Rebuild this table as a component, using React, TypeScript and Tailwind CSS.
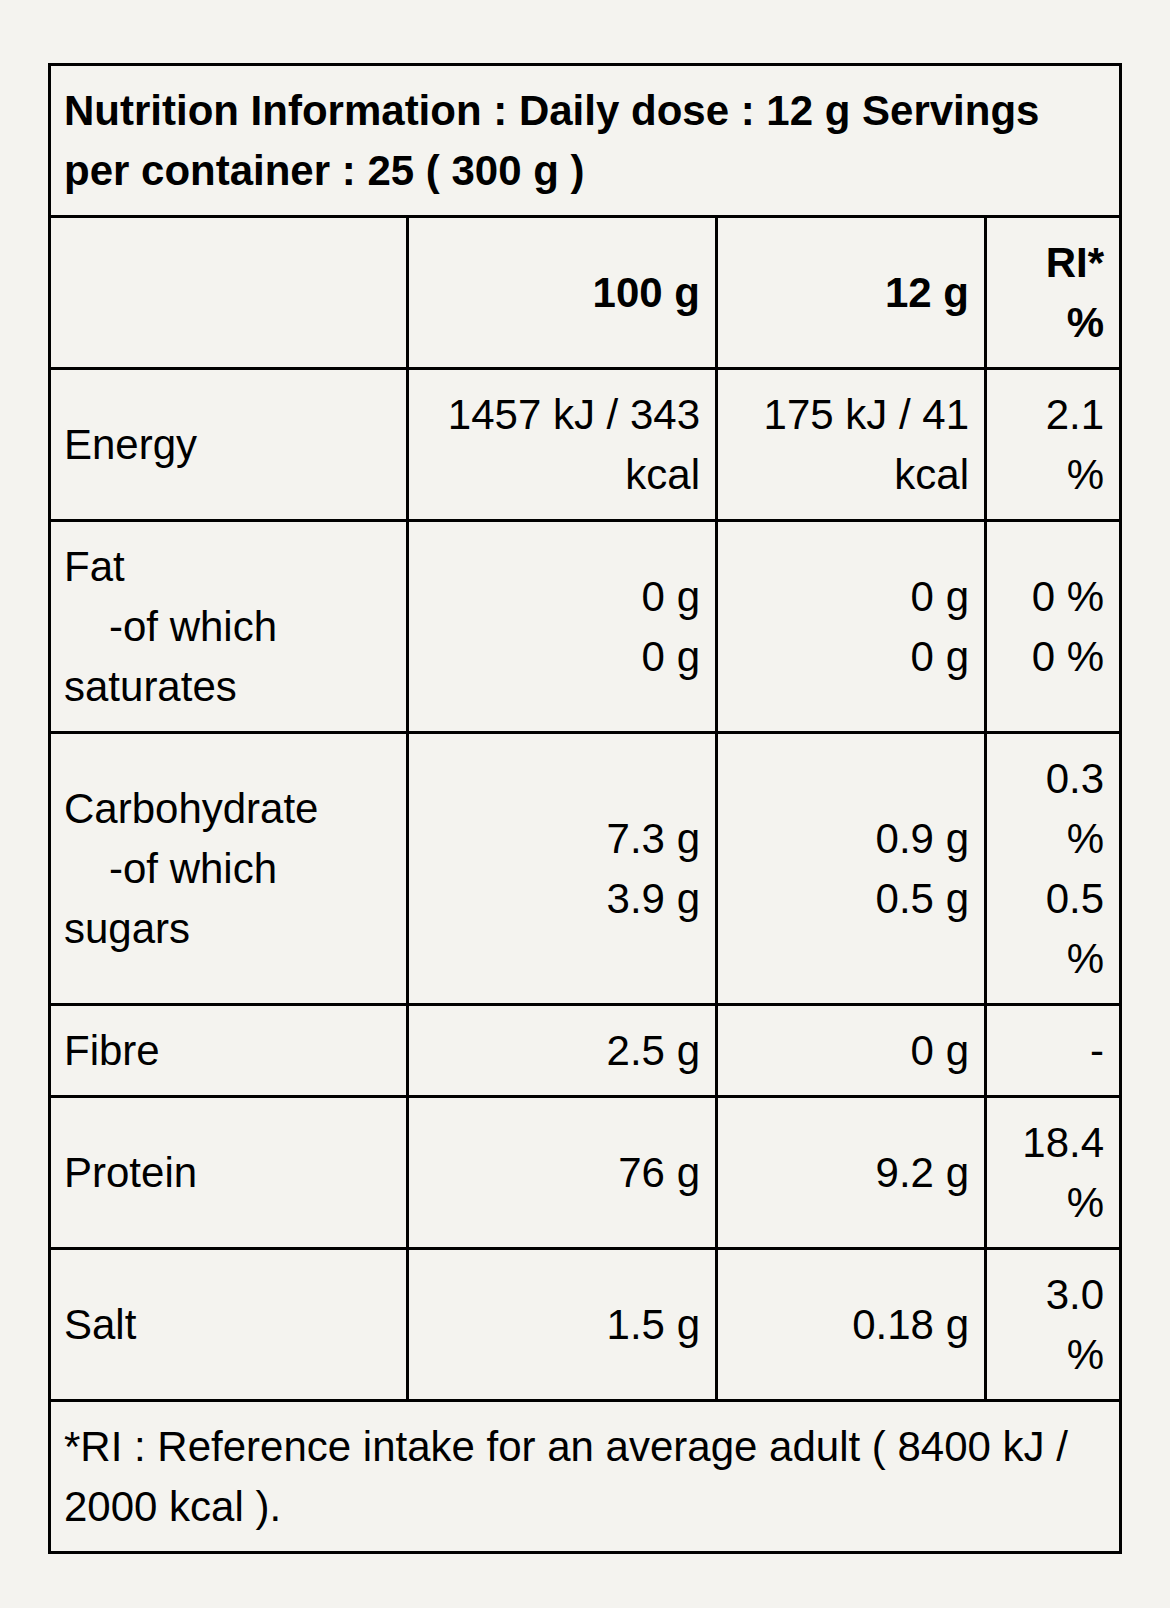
type Row = {
  label: { text: string; indent?: boolean }[];
  per100: string[];
  perDose: string[];
  ri: string[];
};

const rows: Row[] = [
  {
    label: [{ text: 'Energy' }],
    per100: ['1457 kJ / 343', 'kcal'],
    perDose: ['175 kJ / 41', 'kcal'],
    ri: ['2.1', '%'],
  },
  {
    label: [{ text: 'Fat' }, { text: '-of which', indent: true }, { text: 'saturates' }],
    per100: ['0 g', '0 g'],
    perDose: ['0 g', '0 g'],
    ri: ['0 %', '0 %'],
  },
  {
    label: [{ text: 'Carbohydrate' }, { text: '-of which', indent: true }, { text: 'sugars' }],
    per100: ['7.3 g', '3.9 g'],
    perDose: ['0.9 g', '0.5 g'],
    ri: ['0.3', '%', '0.5', '%'],
  },
  { label: [{ text: 'Fibre' }], per100: ['2.5 g'], perDose: ['0 g'], ri: ['-'] },
  { label: [{ text: 'Protein' }], per100: ['76 g'], perDose: ['9.2 g'], ri: ['18.4', '%'] },
  { label: [{ text: 'Salt' }], per100: ['1.5 g'], perDose: ['0.18 g'], ri: ['3.0', '%'] },
];

function Lines({ lines }: { lines: string[] }) {
  return (
    <>
      {lines.map((l, i) => (
        <div key={i}>{l}</div>
      ))}
    </>
  );
}

export default function App() {
  const cell = 'border-[3px] border-black pl-[13px] pr-[15px] pt-[15px] pb-[14px] align-middle';

  return (
    <div
      className="min-h-[1608px] w-full bg-[#f4f3ef] pl-[48px] pt-[63px] text-black"
      style={{ fontFamily: '"Liberation Sans", Arial, Helvetica, sans-serif' }}
    >
      <table className="w-[1071px] table-fixed border-collapse text-[42px] leading-[60px]">
        <colgroup>
          <col className="w-[358px]" />
          <col className="w-[309px]" />
          <col className="w-[269px]" />
          <col className="w-[135px]" />
        </colgroup>
        <thead>
          <tr>
            <th colSpan={4} className={`${cell} text-left font-bold`}>
              Nutrition Information : Daily dose : 12 g Servings
              <br />
              per container : 25 ( 300 g )
            </th>
          </tr>
          <tr>
            <th className={cell}></th>
            <th className={`${cell} text-right font-bold`}>100 g</th>
            <th className={`${cell} text-right font-bold`}>12 g</th>
            <th className={`${cell} text-right font-bold`}>
              <Lines lines={['RI*', '%']} />
            </th>
          </tr>
        </thead>
        <tbody>
          {rows.map((row) => (
            <tr key={row.label[0].text}>
              <td className={`${cell} text-left`}>
                {row.label.map((l, i) => (
                  <div key={i} className={l.indent ? 'pl-[45px]' : ''}>
                    {l.text}
                  </div>
                ))}
              </td>
              <td className={`${cell} text-right`}>
                <Lines lines={row.per100} />
              </td>
              <td className={`${cell} text-right`}>
                <Lines lines={row.perDose} />
              </td>
              <td className={`${cell} text-right`}>
                <Lines lines={row.ri} />
              </td>
            </tr>
          ))}
        </tbody>
        <tfoot>
          <tr>
            <td colSpan={4} className={`${cell} text-left`}>
              *RI : Reference intake for an average adult ( 8400 kJ /
              <br />
              2000 kcal ).
            </td>
          </tr>
        </tfoot>
      </table>
    </div>
  );
}
